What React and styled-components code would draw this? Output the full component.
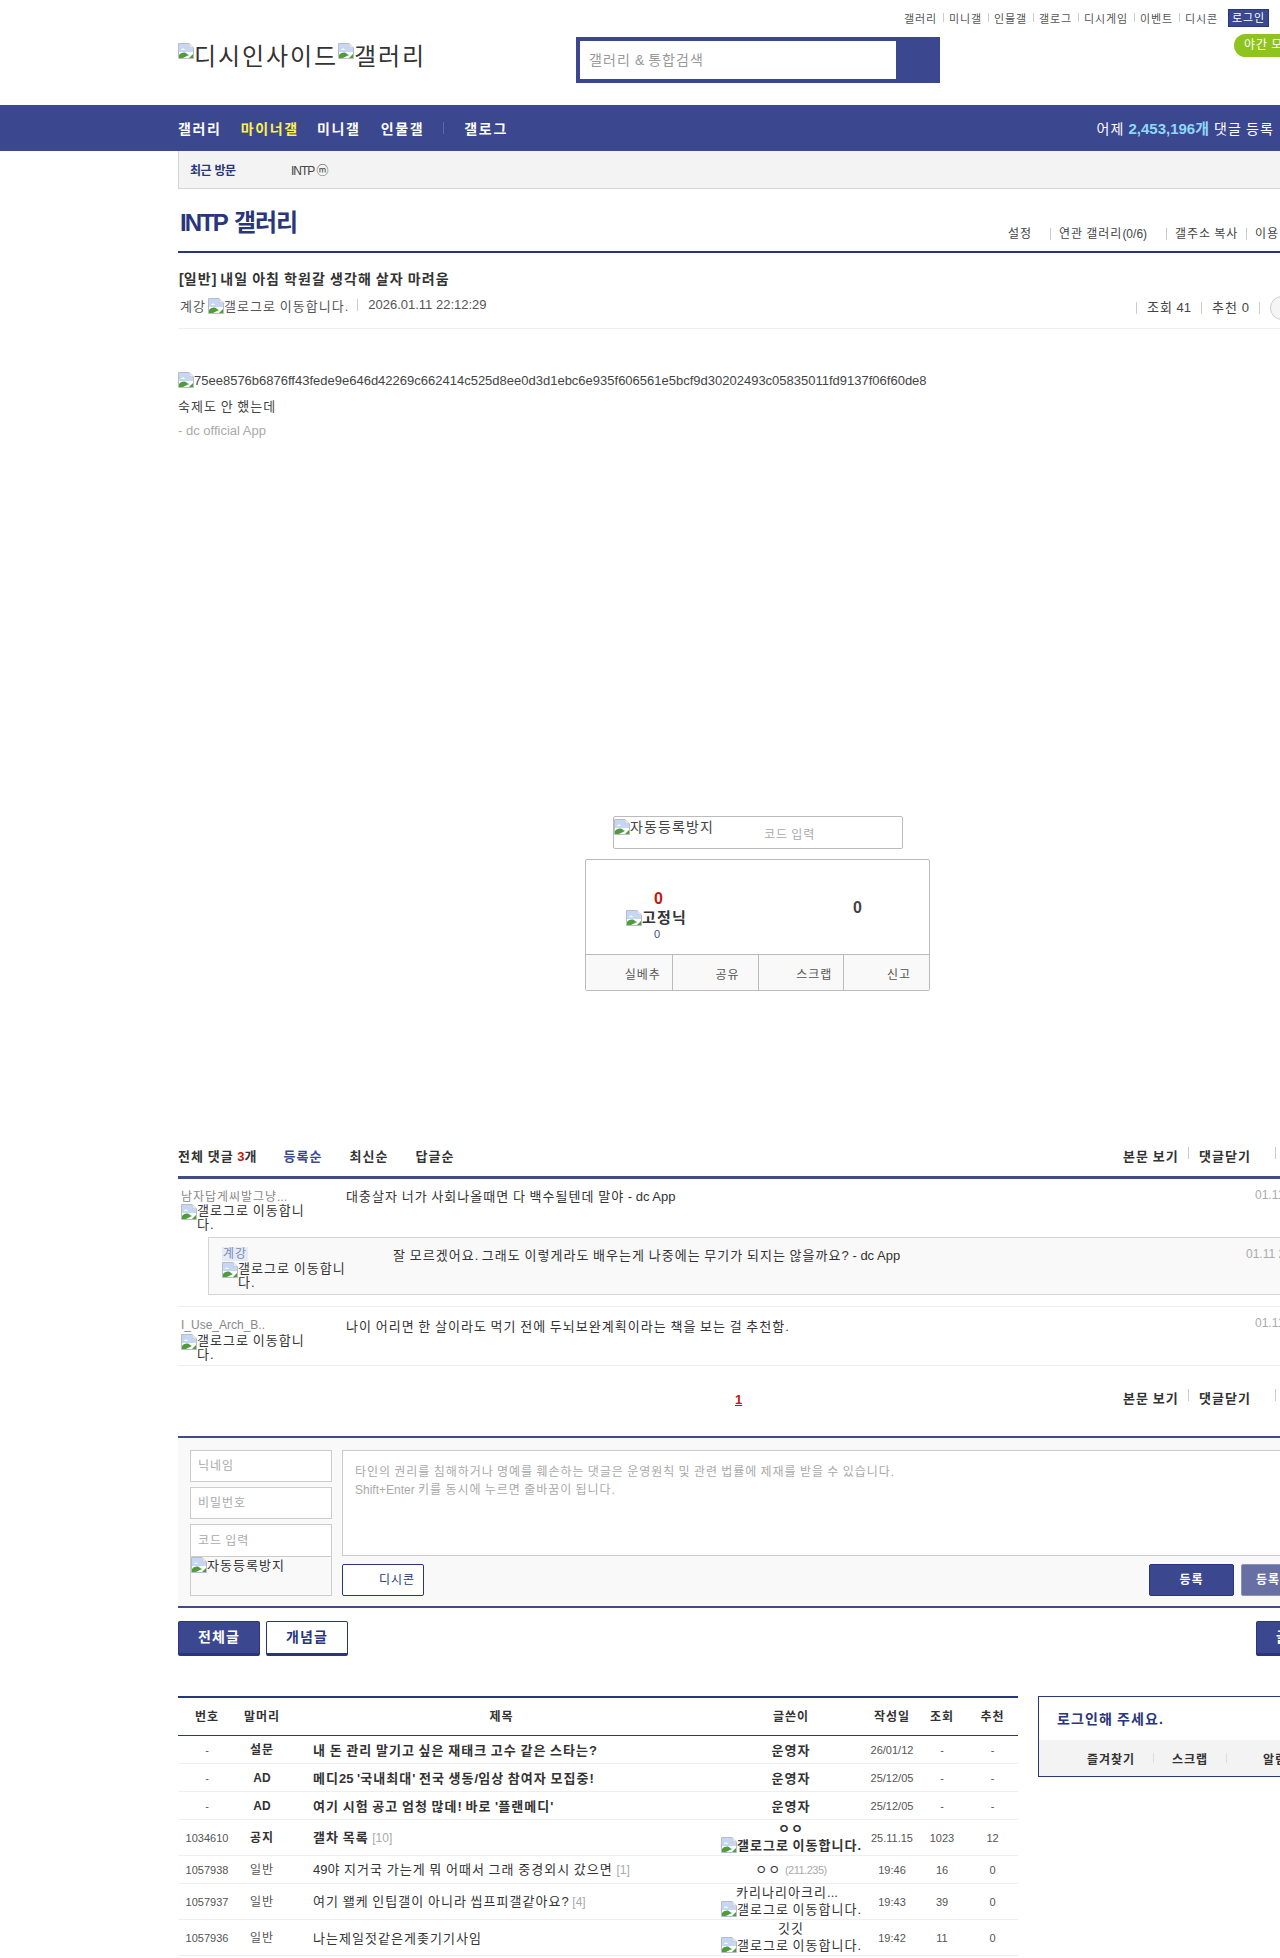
import React from 'react';
import styled, { createGlobalStyle } from 'styled-components';

const Global = createGlobalStyle`
  html, body { margin: 0; padding: 0; background: #fff; }
  body { font-family: "Liberation Sans", "Noto Sans CJK KR", sans-serif; font-size: 12px; color: #333; }
  * { box-sizing: border-box; }
  table { border-collapse: collapse; }
`;
const NAVY = '#29367c';
const BLUE = '#3b4890';

/* Hangul in the reference is set a full em wide; the installed CJK face is .92em. */
const Ko = styled.span`letter-spacing: var(--ko, .08em);`;
const k = text => text.split(/([\uAC00-\uD7A3\u3131-\u318E]+)/).map((part, i) => (i % 2 ? <Ko key={i}>{part}</Ko> : part));
const hangul = node => {
  if (typeof node === 'string') return k(node);
  if (Array.isArray(node)) return node.map(hangul);
  if (React.isValidElement(node) && node.props.children !== undefined) {
    return React.cloneElement(node, undefined, ...React.Children.toArray(node.props.children).map(hangul));
  }
  return node;
};

const Page = styled.div`width: 1280px; height: 1958px; overflow: hidden; position: relative;`;
const Wrap = styled.div`width: 1160px; margin-left: 178px;`;

const Header = styled(Wrap)`height: 105px; display: flex; position: relative;`;
const Logo = styled.div`width: 398px; padding-top: 39px; font-size: 24px; line-height: 36px; color: #333; white-space: nowrap;
  svg { vertical-align: 6px; }`;
const Search = styled.div`margin-top: 37px; width: 364px; height: 46px; border: 4px solid ${BLUE}; background: ${BLUE}; display: flex;`;
const SearchInput = styled.div`width: 316px; background: #fff; color: #999; font-size: 14px; line-height: 38px; padding-left: 9px;`;
const TopLinks = styled.div`position: absolute; top: 9px; left: 720px; display: flex; align-items: center; height: 17px; white-space: nowrap;`;
const TopLink = styled.span`font-size: 11px; color: #555; padding: 0 6px; position: relative;
  & + &::before { content: ''; position: absolute; left: 0; top: 3px; height: 9px; width: 1px; background: #ccc; }`;
const LoginBtn = styled.span`margin-left: 4px; width: 41px; height: 18px; background: ${BLUE}; border: 1px solid ${NAVY}; color: #fff; font-size: 11px; line-height: 17px; text-align: center;`;
const Night = styled.div`position: absolute; left: 1056px; top: 34px; width: 90px; height: 23px; border-radius: 12px; background: #8fc320; color: #fff; font-size: 12px; line-height: 23px; padding-left: 10px; white-space: nowrap;`;

const NavBar = styled.div`height: 46px; background: ${BLUE};`;
const NavInner = styled(Wrap)`height: 46px; display: flex; align-items: center; padding-right: 64px;`;
const NavItem = styled.span`--ko: .12em; font-size: 14px; font-weight: 700; color: ${p => p.$on ? '#fff24a' : '#fff'}; margin-right: ${p => p.$gap}px; white-space: nowrap;`;
const NavDivider = styled.span`width: 1px; height: 12px; background: #5b67a8; margin-right: 20px;`;
const NavStat = styled.span`margin-left: auto; margin-top: -2px; font-size: 14px; color: #fff; white-space: nowrap; b { color: #8fd8f8; font-size: 15px; }`;

const Recent = styled(Wrap)`height: 38px; background: #f3f3f3; border-left: 1px solid #d5d5d5; border-bottom: 1px solid #d5d5d5; display: flex; align-items: center; padding-left: 11px;`;
const RecentLabel = styled.b`--ko: -.5px; font-size: 12px; color: ${NAVY}; width: 101px;`;
const RecentItem = styled.span`font-size: 12px; color: #444; letter-spacing: -1px;`;

const TitleRow = styled.div`height: 64px; border-bottom: 2px solid ${NAVY}; display: flex; position: relative;`;
const GalTitle = styled.h2`--ko: -1px; margin: 17px 0 0 2px; font-size: 24px; line-height: 34px; color: ${NAVY}; font-weight: 700; letter-spacing: -2px; word-spacing: 3px;`;
const TitleLinks = styled.div`position: absolute; left: 0; top: 37px; height: 16px; width: 100%;`;
const TitleLink = styled.span`position: absolute; left: ${p => p.$x}px; font-size: 12px; line-height: 16px; color: #444; white-space: nowrap;
  &::before { content: ''; display: ${p => p.$div ? 'block' : 'none'}; position: absolute; left: -9px; top: 2px; height: 12px; width: 1px; background: #ccc; }`;

const PostHead = styled.div`height: 76px; border-bottom: 1px solid #eee; position: relative;`;
const PostTitle = styled.h3`margin: 0; padding: 16px 0 0 1px; font-size: 14px; line-height: 20px; font-weight: 700; color: #333;`;
const Meta = styled.div`display: flex; align-items: center; padding: 6px 0 0 2px; font-size: 13px; color: #555; height: 26px; white-space: nowrap; gap: 2px;`;
const MetaDate = styled.span`margin-left: 7px; padding-left: 10px; border-left: 1px solid #ccc; line-height: 12px;`;
const MetaRight = styled.div`position: absolute; left: 958px; top: 43px; display: flex; align-items: center; font-size: 13px; color: #444; white-space: nowrap;`;
const MetaStat = styled.span`padding: 0 10px; border-left: 1px solid #ccc; line-height: 12px;`;
const MetaSep = styled.span`width: 1px; height: 12px; background: #ccc; margin-right: 10px;`;
const RoundBtn = styled.span`width: 24px; height: 24px; border-radius: 50%; border: 1px solid #ccc; background: #f5f5f5;`;

const Body = styled.div`height: 807px; padding-top: 43px; font-size: 13px; line-height: 18px; position: relative; color: #444;`;
const BodyLine = styled.div`margin-bottom: ${p => p.$mb ?? 6}px; color: ${p => p.$c || '#444'}; white-space: nowrap; min-height: 18px;`;
const Captcha = styled.div`position: absolute; left: 435px; top: 487px; width: 290px; height: 33px; border: 1px solid #bbb; border-radius: 2px; padding-top: 1px; font-size: 14px; line-height: 18px; white-space: nowrap;`;
const CaptchaHint = styled.span`position: absolute; left: 150px; top: 9px; font-size: 12px; color: #aaa;`;
const RecBox = styled.div`position: absolute; left: 407px; top: 530px; width: 345px; height: 132px; border: 1px solid #bbb; border-radius: 2px; display: flex; flex-direction: column;`;
const RecTop = styled.div`height: 95px; border-bottom: 1px solid #bbb; position: relative;`;
const RecNum = styled.b`position: absolute; left: ${p => p.$x}px; top: ${p => p.$y}px; font-size: 16px; line-height: 18px; color: ${p => p.$c};`;
const RecFix = styled.b`position: absolute; left: 40px; top: 49px; font-size: 15px; line-height: 18px; color: #333; white-space: nowrap;`;
const RecSub = styled.span`position: absolute; left: 68px; top: 67px; font-size: 11px; line-height: 14px; color: #3b4890;`;
const RecFoot = styled.div`flex: 1; display: grid; grid-template-columns: repeat(4, 1fr); background: #f9f9f9;`;
const RecBtn = styled.div`height: 35px; font-size: 12px; color: #555; line-height: 40px; text-align: right; padding-right: ${p => p.$pr}px; & + & { border-left: 1px solid #bbb; }`;

const CmtHead = styled.div`height: 43px; border-bottom: 3px solid #404c85; display: flex; align-items: center; font-size: 13px; font-weight: 700; color: #333; padding-bottom: 2px; white-space: nowrap;`;
const CmtCount = styled.span`em { font-style: normal; color: #c4170c; }`;
const Sort = styled.span`margin-left: ${p => p.$ml}px; color: ${p => p.$on ? '#3b4890' : '#333'};`;
const CmtActions = styled.div`margin-left: auto; width: 215px; display: flex; align-items: center; height: 14px;`;
const CmtAction = styled.span`font-size: 13px; font-weight: 700; color: #333; margin-right: 10px; position: relative; width: ${p => p.$w}px; flex: none;
  &::after { content: ''; position: absolute; right: 0; top: 1px; height: 12px; width: 1px; background: #ccc; }`;

const CmtRow = styled.div`display: flex; position: relative; min-height: ${p => p.$h}px; border-bottom: ${p => p.$nb ? 0 : '1px solid #eee'}; padding-top: ${p => p.$pt ?? 9}px;`;
const CmtWho = styled.div`width: 168px; flex: none; padding-left: 3px; font-size: 12px; line-height: 15px; color: #888;`;
const CmtName = styled.div`margin-top: ${p => p.$mt}px; height: ${p => p.$h}px;`;
const CmtText = styled.div`font-size: 13px; line-height: 18px; color: #333; white-space: nowrap;`;
const CmtDate = styled.span`position: absolute; left: ${p => p.$x}px; top: ${p => p.$y}px; font-size: 12px; color: #aaa; white-space: nowrap;`;
const ReplyBox = styled.div`margin: 0 0 11px 30px; height: 58px; background: #f9f9f9; border: 1px solid #d5d5d5; display: flex; position: relative; padding-top: 9px;`;
const ReplyWho = styled.div`width: 184px; flex: none; padding-left: 13px; font-size: 12px; line-height: 15px; color: #888;`;
const Hl = styled.span`background: #e4ebf7; color: #7c8bb0; padding: 0 1px;`;
const RowLine = styled.div`height: 1px; background: #eee;`;

const Pager = styled.div`height: 70px; display: flex; align-items: center; position: relative; padding-bottom: 4px;`;
const PageNum = styled.b`position: absolute; left: 557px; top: 26px; font-size: 13px; color: #c4170c; text-decoration: underline;`;
const PagerActions = styled(CmtActions)`margin-top: -4px;`;

const WriteBox = styled.div`height: 172px; border-top: 2px solid #404c85; border-bottom: 2px solid #404c85; background: #f9f9f9; padding: 12px 0 0 12px; display: flex;`;
const WriteLeft = styled.div`width: 142px; flex: none; display: flex; flex-direction: column; gap: 5px;`;
const Field = styled.div`height: 32px; border: 1px solid #ccc; background: #fff; color: #aaa; font-size: 12px; line-height: 30px; padding-left: 7px;`;
const CodeField = styled.div`height: 72px; border: 1px solid #ccc; font-size: 12px;`;
const CodeInput = styled.div`height: 32px; background: #fff; border-bottom: 1px solid #ccc; color: #aaa; line-height: 32px; padding-left: 7px;`;
const CodeAlt = styled.div`font-size: 13px; line-height: 17px; color: #333; white-space: nowrap;`;
const WriteRight = styled.div`width: 996px; margin-left: 10px; flex: none;`;
const Textarea = styled.div`height: 106px; background: #fff; border: 1px solid #ccc; padding: 12px 12px; color: #aaa; font-size: 12px; line-height: 18px; white-space: nowrap;`;
const WriteFoot = styled.div`display: flex; margin-top: 8px; height: 32px; position: relative;`;
const DcconBtn = styled.div`width: 82px; height: 32px; border: 1px solid ${NAVY}; border-radius: 2px; background: #fff; color: ${NAVY}; font-size: 12px; line-height: 30px; text-align: right; padding-right: 8px;`;
const Submit = styled.div`width: ${p => p.$w}px; height: 32px; margin-left: ${p => p.$ml}px; border: 1px solid ${NAVY}; border-radius: 2px; background: ${p => p.$light ? '#676fa3' : BLUE}; border-color: ${p => p.$light ? '#8c92b8' : NAVY}; color: #fff; font-size: 12px; font-weight: 700; line-height: 30px; text-align: center; flex: none;`;

const TabsRow = styled.div`height: 88px; padding-top: 13px; display: flex; gap: 6px; position: relative;`;
const Tab = styled.div`width: 82px; height: 35px; border-radius: 2px; border: 1px solid ${NAVY}; border-bottom-width: 3px; background: ${p => p.$on ? BLUE : '#fff'}; color: ${p => p.$on ? '#fff' : NAVY}; font-size: 14px; font-weight: 700; line-height: 30px; text-align: center;`;
const WriteBtn = styled(Tab)`position: absolute; left: 1078px; top: 13px;`;

const Lower = styled.div`display: flex; gap: 20px; align-items: flex-start;`;
const ListTable = styled.table`width: 840px; table-layout: fixed; border-top: 2px solid ${NAVY}; flex: none;`;
const Th = styled.th`height: 38px; font-size: 12px; font-weight: 700; color: #333; border-bottom: 1px solid ${NAVY}; padding: 0 0 2px;`;
const Tr = styled.tr`height: ${p => p.$h}px;`;
const Td = styled.td`font-size: ${p => p.$fs || 11}px; color: ${p => p.$c || '#555'}; font-weight: ${p => p.$b ? 700 : 400}; text-align: ${p => p.$left ? 'left' : 'center'}; padding: ${p => p.$flush ? 0 : 2}px 0 0 ${p => p.$left ? 25 : 0}px; border-bottom: 1px solid #eee; line-height: 17px; white-space: nowrap; overflow: hidden;
  em { font-style: normal; font-weight: 400; color: #aaa; font-size: 12px; }
  small { font-size: 11px; color: #aaa; letter-spacing: -.5px; }`;
const Writer = styled.div`line-height: 17px; font-size: 13px;`;
const WriterName = styled.span`position: relative; left: ${p => p.$dx || 0}px;`;

const Aside = styled.aside`width: 300px; height: 81px; border: 1px solid ${NAVY}; flex: none;`;
const AsideHead = styled.div`height: 43px; font-size: 14px; font-weight: 700; color: ${NAVY}; line-height: 44px; padding-left: 18px;`;
const AsideFoot = styled.div`height: 36px; background: #f3f3f3; position: relative;`;
const AsideLink = styled.span`position: absolute; left: ${p => p.$x}px; top: 10px; font-size: 12px; font-weight: 700; color: #333;`;
const AsideDiv = styled.span`position: absolute; left: ${p => p.$x}px; top: 13px; width: 1px; height: 10px; background: #ddd;`;

const BrokenSvg = styled.svg`width: 16px; height: 16px; flex: none; ${p => p.$float ? 'float: left;' : ''} ${p => p.$inline ? 'vertical-align: -3px;' : ''}`;
const Broken = ({ $float, $inline }) => (
  <BrokenSvg viewBox="0 0 16 16" $float={$float} $inline={$inline}>
    <path d="M.5.5h10.5l4.5 4.5v10.5H.5z" fill="#fff" stroke="#b9bcc2" />
    <path d="M11 .5V5h4.5" fill="#e8eaee" stroke="#b9bcc2" />
    <path d="M1 1h10v4h4v4H1z" fill="#c6d6f5" />
    <path d="M3 7c1-2 3-2 4 0z" fill="#fff" />
    <path d="M1 15v-3c3-3 6-3 8-1l2 1-6 3z" fill="#4f9d3a" />
    <path d="M11 15l4-4v4z" fill="#4f9d3a" />
  </BrokenSvg>
);
const AltBox = styled.span`display: block; width: ${p => p.$w}px; font-size: 13px; line-height: 14px; color: #333; white-space: normal;`;
const Inline = styled.span`white-space: nowrap;`;

const Alt = ({ children }) => <Inline><Broken $inline />{children}</Inline>;
const NameAlt = () => <AltBox $w={125}><Broken $float />{k('갤로그로 이동합니다.')}</AltBox>;

const rows = [
  ['-', '설문', "내 돈 관리 말기고 싶은 재태크 고수 같은 스타는?", '운영자', '26/01/12', '-', '-', 28],
  ['-', 'AD', "메디25 '국내최대' 전국 생동/임상 참여자 모집중!", '운영자', '25/12/05', '-', '-', 28],
  ['-', 'AD', "여기 시험 공고 엄청 많데! 바로 '플랜메디'", '운영자', '25/12/05', '-', '-', 28],
];

export default function App() {
  const topLinks = ['갤러리', '미니갤', '인물갤', '갤로그', '디시게임', '이벤트', '디시콘'];
  return hangul(
    <Page>
      <Global />
      <Header>
        <Logo><Broken />디시인사이드<Broken />갤러리</Logo>
        <Search><SearchInput>갤러리 &amp; 통합검색</SearchInput></Search>
        <TopLinks>{topLinks.map(t => <TopLink key={t}>{t}</TopLink>)}<LoginBtn>로그인</LoginBtn></TopLinks>
        <Night>야간 모드</Night>
      </Header>
      <NavBar>
        <NavInner>
          <NavItem $gap={19}>갤러리</NavItem>
          <NavItem $on $gap={18}>마이너갤</NavItem>
          <NavItem $gap={20}>미니갤</NavItem>
          <NavItem $gap={19}>인물갤</NavItem>
          <NavDivider />
          <NavItem $gap={0}>갤로그</NavItem>
          <NavStat>어제 <b>2,453,196개</b> 댓글 등록</NavStat>
        </NavInner>
      </NavBar>
      <Recent>
        <RecentLabel>최근 방문</RecentLabel>
        <RecentItem>INTP ⓜ</RecentItem>
      </Recent>
      <Wrap>
        <TitleRow>
          <GalTitle>INTP 갤러리</GalTitle>
          <TitleLinks>
            <TitleLink $x={830}>설정</TitleLink>
            <TitleLink $x={881} $div>연관 갤러리(0/6)</TitleLink>
            <TitleLink $x={997} $div>갤주소 복사</TitleLink>
            <TitleLink $x={1077} $div>이용 안내</TitleLink>
          </TitleLinks>
        </TitleRow>
        <PostHead>
          <PostTitle>[일반] 내일 아침 학원갈 생각해 살자 마려움</PostTitle>
          <Meta>계강 <Alt>갤로그로 이동합니다.</Alt><MetaDate>2026.01.11 22:12:29</MetaDate></Meta>
          <MetaRight>
            <MetaStat>조회 41</MetaStat>
            <MetaStat>추천 0</MetaStat>
            <MetaSep />
            <RoundBtn />
          </MetaRight>
        </PostHead>
        <Body>
          <BodyLine $mb={8}><Alt>75ee8576b6876ff43fede9e646d42269c662414c525d8ee0d3d1ebc6e935f606561e5bcf9d30202493c05835011fd9137f06f60de8</Alt></BodyLine>
          <BodyLine>숙제도 안 했는데</BodyLine>
          <BodyLine $c="#aaa">- dc official App</BodyLine>
          <Captcha><Alt>자동등록방지</Alt><CaptchaHint>코드 입력</CaptchaHint></Captcha>
          <RecBox>
            <RecTop>
              <RecNum $x={68} $y={30} $c="#c4170c">0</RecNum>
              <RecFix><Alt>고정닉</Alt></RecFix>
              <RecSub>0</RecSub>
              <RecNum $x={267} $y={39} $c="#444">0</RecNum>
            </RecTop>
            <RecFoot>
              <RecBtn $pr={11}>실베추</RecBtn>
              <RecBtn $pr={18}>공유</RecBtn>
              <RecBtn $pr={11}>스크랩</RecBtn>
              <RecBtn $pr={18}>신고</RecBtn>
            </RecFoot>
          </RecBox>
        </Body>
        <CmtHead>
          <CmtCount>전체 댓글 <em>3</em>개</CmtCount>
          <Sort $ml={26} $on>등록순</Sort>
          <Sort $ml={27}>최신순</Sort>
          <Sort $ml={27}>답글순</Sort>
          <CmtActions><CmtAction $w={66}>본문 보기</CmtAction><CmtAction $w={77}>댓글닫기</CmtAction></CmtActions>
        </CmtHead>
        <CmtRow $h={58} $nb>
          <CmtWho><CmtName $mt={2} $h={14}>남자답게씨발그냥...</CmtName><NameAlt /></CmtWho>
          <CmtText>대충살자 너가 사회나올때면 다 백수될텐데 말야 - dc App</CmtText>
          <CmtDate $x={1077} $y={9}>01.11 22:30:11</CmtDate>
        </CmtRow>
        <ReplyBox>
          <ReplyWho><CmtName $mt={0} $h={15}><Hl>계강</Hl></CmtName><NameAlt /></ReplyWho>
          <CmtText>잘 모르겠어요. 그래도 이렇게라도 배우는게 나중에는 무기가 되지는 않을까요? - dc App</CmtText>
          <CmtDate $x={1037} $y={9}>01.11 22:40:12</CmtDate>
        </ReplyBox>
        <RowLine />
        <CmtRow $h={59} $pt={11}>
          <CmtWho><CmtName $mt={0} $h={16}>I_Use_Arch_B..</CmtName><NameAlt /></CmtWho>
          <CmtText>나이 어리면 한 살이라도 먹기 전에 두뇌보완계획이라는 책을 보는 걸 추천함.</CmtText>
          <CmtDate $x={1077} $y={9}>01.11 22:41:20</CmtDate>
        </CmtRow>
        <Pager>
          <PageNum>1</PageNum>
          <PagerActions><CmtAction $w={66}>본문 보기</CmtAction><CmtAction $w={77}>댓글닫기</CmtAction></PagerActions>
        </Pager>
        <WriteBox>
          <WriteLeft>
            <Field>닉네임</Field>
            <Field>비밀번호</Field>
            <CodeField>
              <CodeInput>코드 입력</CodeInput>
              <CodeAlt><Alt>자동등록방지</Alt></CodeAlt>
            </CodeField>
          </WriteLeft>
          <WriteRight>
            <Textarea>
              타인의 권리를 침해하거나 명예를 훼손하는 댓글은 운영원칙 및 관련 법률에 제재를 받을 수 있습니다.<br />
              Shift+Enter 키를 동시에 누르면 줄바꿈이 됩니다.
            </Textarea>
            <WriteFoot>
              <DcconBtn>디시콘</DcconBtn>
              <Submit $w={85} $ml={725}>등록</Submit>
              <Submit $w={85} $ml={7} $light>등록+추천</Submit>
            </WriteFoot>
          </WriteRight>
        </WriteBox>
        <TabsRow>
          <Tab $on>전체글</Tab>
          <Tab>개념글</Tab>
          <WriteBtn $on>글쓰기</WriteBtn>
        </TabsRow>
        <Lower>
          <ListTable>
            <colgroup>
              <col width="58" /><col width="52" /><col width="427" /><col width="152" /><col width="50" /><col width="50" /><col width="51" />
            </colgroup>
            <thead>
              <tr>
                <Th>번호</Th><Th>말머리</Th><Th>제목</Th><Th>글쓴이</Th><Th>작성일</Th><Th>조회</Th><Th>추천</Th>
              </tr>
            </thead>
            <tbody>
              {rows.map((r, i) => (
                <Tr key={i} $h={r[7]}>
                  <Td>{r[0]}</Td>
                  <Td $b $fs={12} $c="#333">{r[1]}</Td>
                  <Td $left $b $fs={13} $c="#333">{r[2]}</Td>
                  <Td $b $fs={13} $c="#333">{r[3]}</Td>
                  <Td>{r[4]}</Td><Td>{r[5]}</Td><Td>{r[6]}</Td>
                </Tr>
              ))}
              <Tr $h={36}>
                <Td>1034610</Td><Td $b $fs={12} $c="#333">공지</Td>
                <Td $left $b $fs={13} $c="#333">갤차 목록 <em>[10]</em></Td>
                <Td $flush $b $fs={13} $c="#333"><Writer>ㅇㅇ<br /><Alt>갤로그로 이동합니다.</Alt></Writer></Td>
                <Td>25.11.15</Td><Td>1023</Td><Td>12</Td>
              </Tr>
              <Tr $h={28}>
                <Td>1057938</Td><Td $fs={12}>일반</Td>
                <Td $left $fs={13} $c="#333">49야 지거국 가는게 뭐 어때서 그래 중경외시 갔으면 <em>[1]</em></Td>
                <Td $fs={13} $c="#333">ㅇㅇ <small>(211.235)</small></Td>
                <Td>19:46</Td><Td>16</Td><Td>0</Td>
              </Tr>
              <Tr $h={36}>
                <Td>1057937</Td><Td $fs={12}>일반</Td>
                <Td $left $fs={13} $c="#333">여기 왤케 인팁갤이 아니라 씹프피갤같아요? <em>[4]</em></Td>
                <Td $flush $fs={13} $c="#333"><Writer><WriterName $dx={-4}>카리나리아크리...</WriterName><br /><Alt>갤로그로 이동합니다.</Alt></Writer></Td>
                <Td>19:43</Td><Td>39</Td><Td>0</Td>
              </Tr>
              <Tr $h={36}>
                <Td>1057936</Td><Td $fs={12}>일반</Td>
                <Td $left $fs={13} $c="#333">나는제일젓같은게좆기기사임</Td>
                <Td $flush $fs={13} $c="#333"><Writer>깃깃<br /><Alt>갤로그로 이동합니다.</Alt></Writer></Td>
                <Td>19:42</Td><Td>11</Td><Td>0</Td>
              </Tr>
            </tbody>
          </ListTable>
          <Aside>
            <AsideHead>로그인해 주세요.</AsideHead>
            <AsideFoot>
              <AsideLink $x={48}>즐겨찾기</AsideLink>
              <AsideDiv $x={114} />
              <AsideLink $x={133}>스크랩</AsideLink>
              <AsideDiv $x={187} />
              <AsideLink $x={224}>알림</AsideLink>
            </AsideFoot>
          </Aside>
        </Lower>
      </Wrap>
    </Page>
  );
}
